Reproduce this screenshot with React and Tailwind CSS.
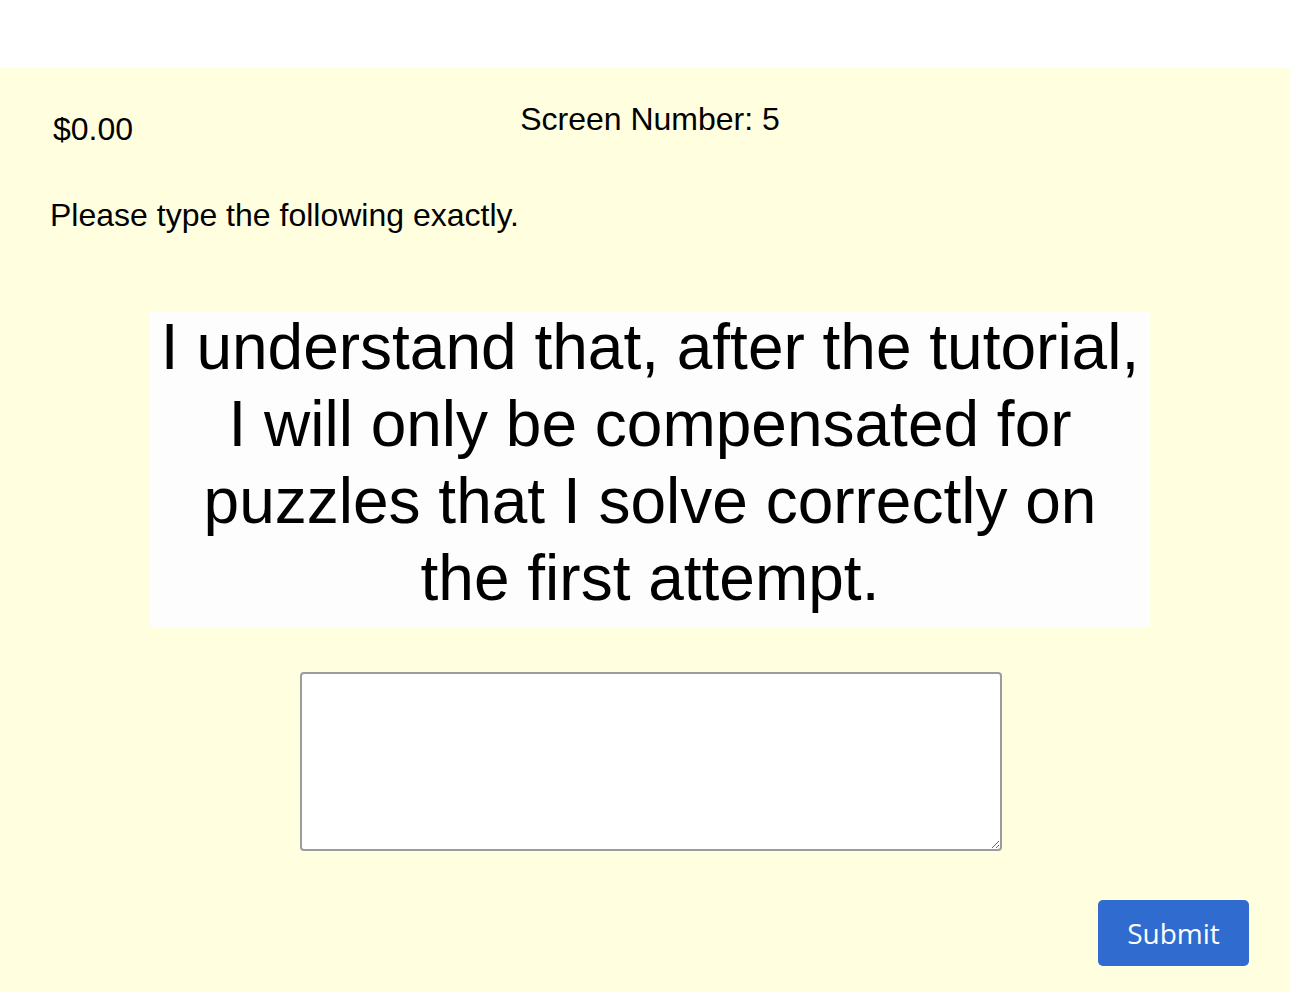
export default function App() {
  return (
    <div className="w-[1300px] min-h-[992px] bg-white" style={{ fontFamily: '"Liberation Sans", Arial, sans-serif' }}>
      <div className="h-[68px]" />
      <div className="w-[1290px] h-[924px] bg-[#ffffe0] text-black flex flex-col">
        <div className="flex pt-[33px]">
          <div className="w-[390px] pl-[53px] pt-[10px] text-[32px] leading-[36px]">$0.00</div>
          <div className="w-[520px] text-center text-[32px] leading-[36px]">Screen Number: 5</div>
        </div>
        <div className="mt-[50px] pl-[50px] text-[32px] leading-[36px]">Please type the following exactly.</div>
        <div className="mt-[79px] ml-[150px] w-[1000px] h-[315px] bg-[#fdfdfd] px-2 text-center text-[64px] leading-[77px]">
          <div className="-mt-[3px]">
            I understand that, after the tutorial,<br />
            I will only be compensated for<br />
            puzzles that I solve correctly on<br />
            the first attempt.
          </div>
        </div>
        <textarea className="mt-[45px] ml-[300px] w-[702px] h-[179px] bg-white border-2 border-[#9c9c9c] rounded-[4px] outline-none" />
        <div className="mt-[49px] flex justify-end pr-[41px]">
          <button
            className="w-[151px] h-[66px] bg-[#306ccf] text-white rounded-[5px] text-[28px] leading-none"
            style={{ fontFamily: '"Open Sans", "Noto Sans", sans-serif' }}
          >
            Submit
          </button>
        </div>
      </div>
    </div>
  );
}
